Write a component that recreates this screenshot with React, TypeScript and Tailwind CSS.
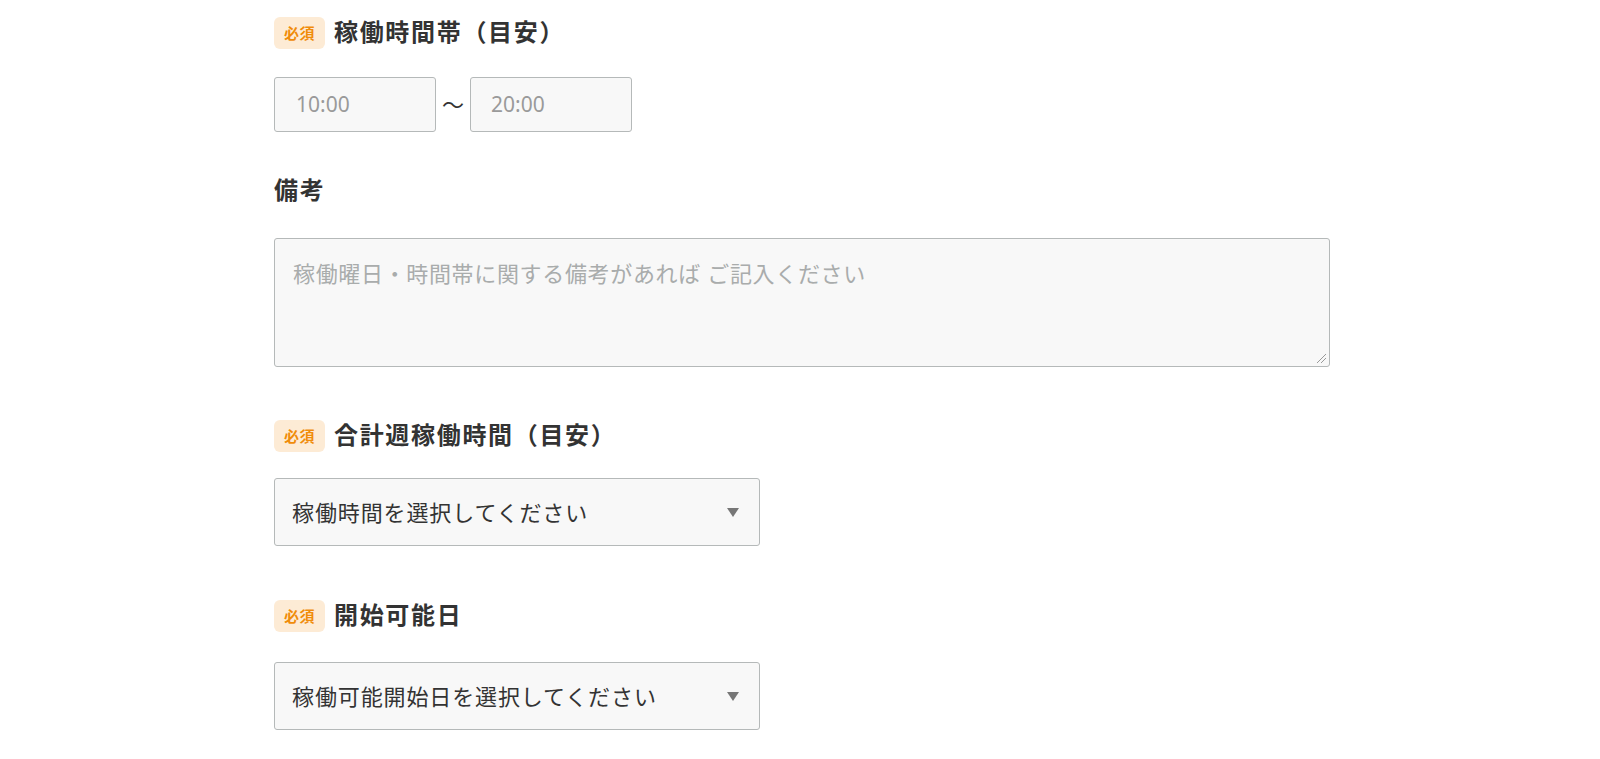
import React from "react";

const font = { fontFamily: '"Noto Sans", "Noto Sans CJK JP", sans-serif' };

function Badge() {
  return (
    <span className="inline-flex h-[32px] w-[51px] items-center justify-center rounded-[6px] bg-[#fdebd5] text-[15px] font-bold text-[#f08c0a] mr-[9px] tracking-[0.04em]">
      必須
    </span>
  );
}

function Label({ required, children }: { required?: boolean; children: React.ReactNode }) {
  return (
    <div className="flex h-[32px] items-center">
      {required && <Badge />}
      <span className="pb-[3px] text-[24px] font-bold leading-none text-[#333333] tracking-[0.07em]">{children}</span>
    </div>
  );
}

function Select({ placeholder, className }: { placeholder: string; className?: string }) {
  return (
    <div
      className={
        "flex w-[486px] items-center justify-between rounded-[3px] border border-[#b5b9b9] bg-[#f8f8f8] pl-[17px] pr-[20px] " +
        (className || "")
      }
    >
      <span className="text-[22px] text-[#333333] tracking-[0.04em]">{placeholder}</span>
      <svg width="12" height="9" viewBox="0 0 12 9">
        <polygon points="0,0 12,0 6,9" fill="#777777" />
      </svg>
    </div>
  );
}

export default function App() {
  return (
    <div className="min-h-[759px] w-full bg-white" style={font}>
      <div className="ml-[274px] w-[1056px] pt-[17px]">
        <Label required>稼働時間帯（目安）</Label>
        <div className="mt-[28px] flex items-center">
          <div className="flex h-[55px] w-[162px] items-center rounded-[3px] border border-[#b5b9b9] bg-[#f8f8f8] pl-[21px] text-[21px] text-[#9a9a9a]">
            10:00
          </div>
          <span className="mx-[6px] text-[22px] text-[#333333]">～</span>
          <div className="flex h-[55px] w-[162px] items-center rounded-[3px] border border-[#b5b9b9] bg-[#f8f8f8] pl-[20px] text-[21px] text-[#9a9a9a]">
            20:00
          </div>
        </div>

        <div className="mt-[43px]">
          <Label>備考</Label>
        </div>
        <div className="relative mt-[31px] h-[129px] w-[1056px] rounded-[3px] border border-[#b5b9b9] bg-[#f8f8f8] px-[18px] pt-[18px]">
          <span className="text-[22px] leading-[32px] text-[#a9acac] tracking-[0.03em]">
            稼働曜日・時間帯に関する備考があれば ご記入ください
          </span>
          <svg className="absolute bottom-[2px] right-[2px]" width="12" height="12" viewBox="0 0 12 12">
            <line x1="11" y1="2" x2="2" y2="11" stroke="#9a9a9a" strokeWidth="1" />
            <line x1="11" y1="6" x2="6" y2="11" stroke="#9a9a9a" strokeWidth="1" />
          </svg>
        </div>

        <div className="mt-[53px]">
          <Label required>合計週稼働時間（目安）</Label>
        </div>
        <Select placeholder="稼働時間を選択してください" className="mt-[26px] h-[68px]" />

        <div className="mt-[54px]">
          <Label required>開始可能日</Label>
        </div>
        <Select placeholder="稼働可能開始日を選択してください" className="mt-[30px] h-[68px]" />
      </div>
    </div>
  );
}
